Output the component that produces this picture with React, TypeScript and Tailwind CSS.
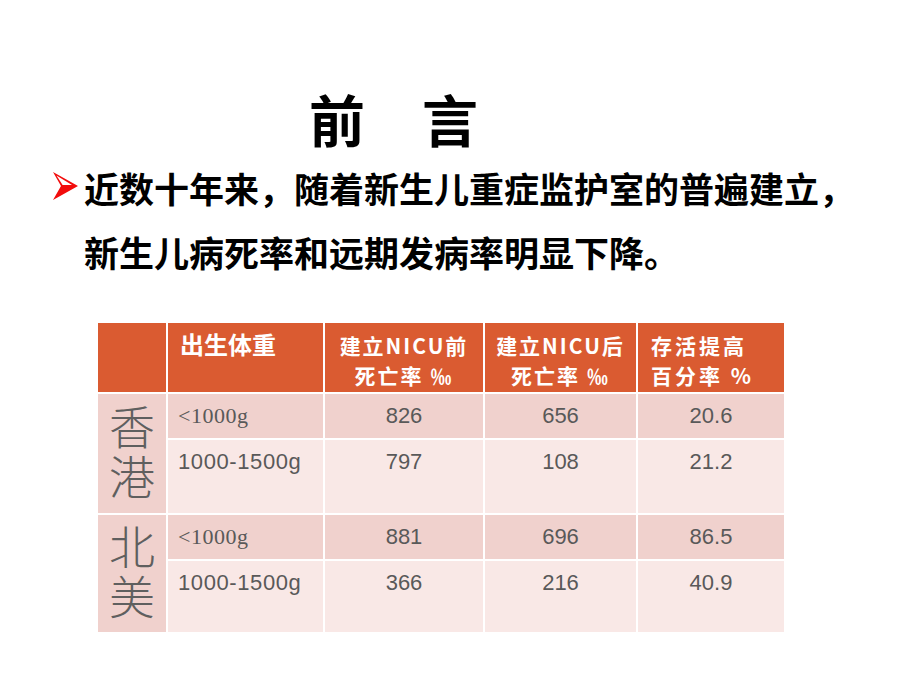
import React from "react";

const cjk = "font-['Noto_Sans_CJK_SC',sans-serif]";
const num = "font-['Liberation_Sans','Noto_Sans_CJK_SC',sans-serif]";
const serif = "font-['Liberation_Serif','Noto_Sans_CJK_SC',serif]";

const dark = "bg-[#F0D1CD]";
const light = "bg-[#F9E8E6]";

function Arrow() {
	return (
		<svg width="26" height="28" viewBox="0 0 26 28" className="shrink-0 mt-[16px]">
			<polygon points="0,0 25,14 0,28 8,14" fill="#F20C0C" />
			<polygon points="3.5,3.6 19,13 9.6,13" fill="#ffffff" />
		</svg>
	);
}

type Row = { w: string; wSerif?: boolean; a: string; b: string; c: string; bg: string };

function DataRow({ w, wSerif, a, b, c, bg }: Row) {
	const cell = `${bg} pt-[7px] leading-[30px] text-[22px] text-[#595959]`;
	return (
		<>
			<div className={`${cell} pl-[10px] ${wSerif ? serif + " tracking-[0.5px]" : num + " tracking-[0.6px]"}`}>{w}</div>
			<div className={`${cell} ${num} text-center`}>{a}</div>
			<div className={`${cell} ${num} text-center`}>{b}</div>
			<div className={`${cell} ${num} text-center`}>{c}</div>
		</>
	);
}

function Region({ name }: { name: string }) {
	return (
		<div className={`${dark} row-span-2 flex items-center justify-center`}>
			<span className={`[writing-mode:vertical-rl] ${cjk} text-[46px] leading-[46px] tracking-[4px] text-[#5f5f5f] font-light`}>
				{name}
			</span>
		</div>
	);
}

export default function App() {
	return (
		<div className="w-[920px] h-[690px] bg-white overflow-hidden">
			<div className={`flex gap-[57px] pl-[309px] pt-[90px] ${cjk} font-bold text-[56px] leading-none text-black`}>
				<span>前</span>
				<span>言</span>
			</div>

			<div className="flex gap-[5px] pl-[53px] mt-[10px]">
				<Arrow />
				<div className={`${cjk} font-bold text-[35px] leading-[64px] text-black`}>
					<div>近数十年来，随着新生儿重症监护室的普遍建立，</div>
					<div>新生儿病死率和远期发病率明显下降。</div>
				</div>
			</div>

			<div className="ml-[98px] mt-[39px] w-[686px] grid grid-cols-[68px_155px_158px_151px_146px] grid-rows-[69px_44px_73px_44px_71px] gap-[2px] bg-white">
				<div className="bg-[#DA5B31]" />
				<div className={`bg-[#DA5B31] pl-[12px] pt-[6px] ${cjk} font-bold text-[24px] leading-[30px] text-white`}>出生体重</div>
				<div className={`bg-[#DA5B31] pt-[7px] text-center ${cjk} font-bold text-[21px] leading-[30px] tracking-[2px] text-white`}>
					<div>建立NICU前</div>
					<div>死亡率 ‰</div>
				</div>
				<div className={`bg-[#DA5B31] pt-[7px] text-center ${cjk} font-bold text-[21px] leading-[30px] tracking-[2px] text-white`}>
					<div>建立NICU后</div>
					<div>死亡率 ‰</div>
				</div>
				<div className={`bg-[#DA5B31] pt-[7px] pl-[13px] ${cjk} font-bold text-[21px] leading-[30px] tracking-[3px] text-white`}>
					<div>存活提高</div>
					<div>百分率 %</div>
				</div>

				<Region name="香港" />
				<DataRow w="<1000g" wSerif a="826" b="656" c="20.6" bg={dark} />
				<DataRow w="1000-1500g" a="797" b="108" c="21.2" bg={light} />

				<Region name="北美" />
				<DataRow w="<1000g" wSerif a="881" b="696" c="86.5" bg={dark} />
				<DataRow w="1000-1500g" a="366" b="216" c="40.9" bg={light} />
			</div>
		</div>
	);
}
